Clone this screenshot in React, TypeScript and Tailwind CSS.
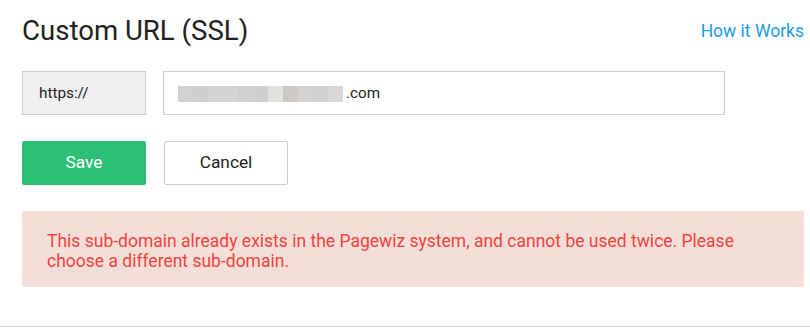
import React from "react";

const shades = ["#d2d2d2", "#cfcfcf", "#d4d4d4", "#d6d3d3", "#d0d0d0", "#cfcfd0", "#e2e2e2", "#cdcac6", "#d3d3d5", "#d1d1d1", "#d8d8d8"];

export default function App() {
  return (
    <div className="w-[810px] h-[333px] bg-white flex flex-col" style={{ fontFamily: "Roboto, 'Liberation Sans', sans-serif" }}>
      <div className="pl-[22px] pr-[6px] flex flex-col">
        <div className="flex items-start justify-between pt-[15px]">
          <h1 className="text-[27.6px] leading-[32px] text-[#222222] font-normal">Custom URL (SSL)</h1>
          <a className="text-[17.5px] leading-[20px] text-[#1c9be6] mt-[6px]">How it Works</a>
        </div>
        <div className="flex mt-[24px] gap-[17px]">
          <div className="w-[124px] h-[44px] bg-[#f0f0f0] border border-[#cccccc] flex items-center pl-[16px] text-[15.3px] text-[#222222]">
            https://
          </div>
          <div className="w-[562px] h-[44px] bg-white border border-[#cccccc] flex items-center pl-[14px] text-[15.3px] text-[#222222]">
            <div className="flex h-[16px] mt-[2px]">
              {shades.map((c, i) => (
                <div key={i} className="w-[15px] h-[16px]" style={{ backgroundColor: c }} />
              ))}
            </div>
            <span className="ml-[3px]">.com</span>
          </div>
        </div>
        <div className="flex mt-[26px] gap-[18px]">
          <button className="w-[124px] h-[44px] bg-[#2ebf77] rounded-[2px] text-white text-[17.3px]">Save</button>
          <button className="w-[124px] h-[44px] bg-white border border-[#cccccc] rounded-[2px] text-[#222222] text-[17.3px]">Cancel</button>
        </div>
        <div className="mt-[26px] h-[76px] bg-[#f4dfd8] rounded-[2px] pl-[25px] pr-[40px] pt-[20px] text-[17.5px] leading-[20px] text-[#f2433f]">
          This sub-domain already exists in the Pagewiz system, and cannot be used twice. Please choose a different sub-domain.
        </div>
      </div>
      <div className="mt-[39px] h-px bg-[#d3d3d3] w-full" />
    </div>
  );
}
